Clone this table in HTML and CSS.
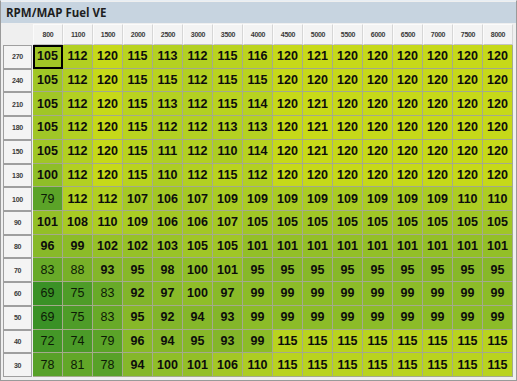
FILE: index.html
```html
<!DOCTYPE html>
<html>
<head>
<meta charset="utf-8">
<link rel="stylesheet" href="styles.css">
</head>
<body>
<div class="win">
  <div class="title">RPM/MAP Fuel VE</div>
  <div class="grid" id="grid"></div>
</div>
<script src="app.js"></script>
</body>
</html>
```

FILE: styles.css
```css
* { box-sizing: border-box; }
html, body { margin: 0; padding: 0; background: #f0f0f0; }
.win {
  width: 517px;
  height: 381px;
  border: 1px solid #9a9a9a;
  border-top: 1px solid #e8eef4;
  background: #efefef;
  display: flex;
  flex-direction: column;
}
.title {
  height: 21px;
  margin-top: 1px;
  background: #c7d4e0;
  font-family: "Open Sans", "Noto Sans", sans-serif;
  font-weight: 700;
  font-size: 11.5px;
  line-height: 21px;
  color: #1e1e1e;
  padding-left: 5px;
}
.grid {
  margin: 1px 0 0 2px;
  display: grid;
  grid-template-columns: 30px repeat(16, 30px);
  grid-template-rows: 21px repeat(14, 1fr);
  height: 353px;
}
.corner { background: transparent; }
.hd, .lb {
  display: flex;
  align-items: center;
  justify-content: center;
  font-family: "Liberation Sans", Arial, sans-serif;
  font-size: 7px;
  font-weight: 700;
  color: #3a3a3a;
  letter-spacing: -0.3px;
}
.hd {
  background: #f3f3f3;
  border: 1px solid #fbfbfb;
  border-right: 1px solid #d6d6d6;
  border-bottom: 1px solid #c4c4c4;
}
.lb {
  background: #f4f4f4;
  border: 1px solid #9f9f9f;
  margin-right: 1px;
}
.c {
  display: flex;
  align-items: center;
  justify-content: center;
  font-family: "Liberation Sans", Arial, sans-serif;
  font-size: 12.5px;
  font-weight: 700;
  color: #0c0c0c;
  border-right: 1px solid #a4aa8c;
  border-bottom: 1px solid #a4aa8c;
}
.c.lo { font-weight: 400; color: #0c1a06; }
.c.sel { outline: 2px solid #000; outline-offset: -2px; }
```

FILE: app.js
```js
var rpm = [800,1100,1500,2000,2500,3000,3500,4000,4500,5000,5500,6000,6500,7000,7500,8000];
var rows = [
 [270,[105,112,120,115,113,112,115,116,120,121,120,120,120,120,120,120]],
 [240,[105,112,120,115,115,112,115,115,120,120,120,120,120,120,120,120]],
 [210,[105,112,120,115,113,112,115,114,120,121,120,120,120,120,120,120]],
 [180,[105,112,120,115,112,112,113,113,120,121,120,120,120,120,120,120]],
 [150,[105,112,120,115,111,112,110,114,120,121,120,120,120,120,120,120]],
 [130,[100,112,120,115,110,112,115,112,120,120,120,120,120,120,120,120]],
 [100,[79,112,112,107,106,107,109,109,109,109,109,109,109,109,110,110]],
 [90,[101,108,110,109,106,106,107,105,105,105,105,105,105,105,105,105]],
 [80,[96,99,102,102,103,105,105,101,101,101,101,101,101,101,101,101]],
 [70,[83,88,93,95,98,100,101,95,95,95,95,95,95,95,95,95]],
 [60,[69,75,83,92,97,100,97,99,99,99,99,99,99,99,99,99]],
 [50,[69,75,83,95,92,94,93,99,99,99,99,99,99,99,99,99]],
 [40,[72,74,79,96,94,95,93,99,115,115,115,115,115,115,115,115]],
 [30,[78,81,78,94,100,101,106,110,115,115,115,115,115,115,115,115]]
];
var stops = [
 [69,[58,145,38]],[75,[78,156,40]],[83,[104,170,40]],[88,[120,176,40]],
 [93,[132,182,42]],[99,[140,188,40]],[105,[160,198,38]],[112,[178,208,34]],
 [121,[200,218,24]]
];
function color(v){
  for (var i=0;i<stops.length-1;i++){
    var a=stops[i], b=stops[i+1];
    if (v<=b[0]){
      var t=Math.max(0,(v-a[0])/(b[0]-a[0]));
      var c=a[1].map(function(x,k){return Math.round(x+(b[1][k]-x)*t);});
      return 'rgb('+c.join(',')+')';
    }
  }
  return 'rgb(200,218,24)';
}
var g=document.getElementById('grid');
function el(cls,txt){var d=document.createElement('div');d.className=cls;if(txt!==undefined)d.textContent=txt;g.appendChild(d);return d;}
el('corner');
rpm.forEach(function(r){el('hd',r);});
rows.forEach(function(row,ri){
  el('lb',row[0]);
  row[1].forEach(function(v,ci){
    var d=el('c'+(v<90?' lo':'')+(ri===0&&ci===0?' sel':''),v);
    d.style.background=color(v);
  });
});
```
